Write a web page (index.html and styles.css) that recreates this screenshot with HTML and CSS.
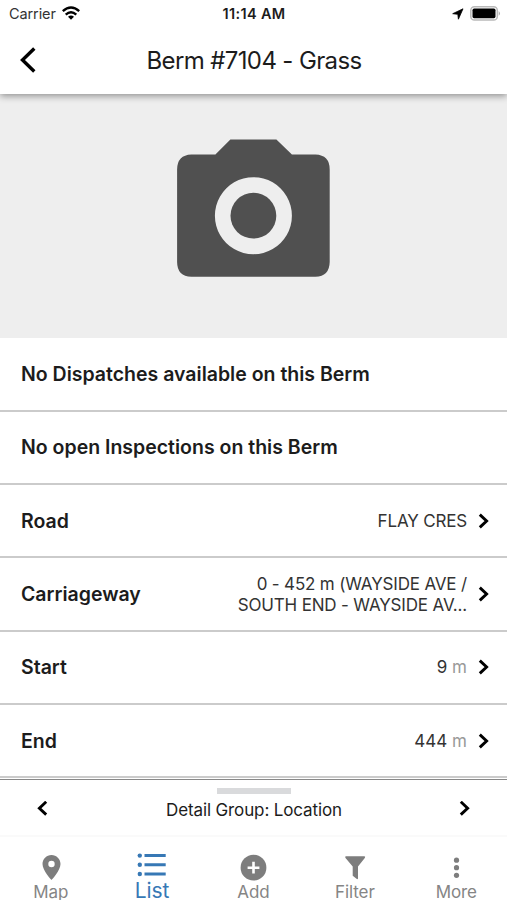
FILE: index.html
```html
<!DOCTYPE html>
<html lang="en">
<head>
<meta charset="utf-8">
<title>Berm #7104 - Grass</title>
<link rel="stylesheet" href="styles.css">
</head>
<body>
<div class="screen">
  <header class="top">
    <div class="status">
      <div class="status-left"><span class="carrier">Carrier</span>
        <svg class="wifi" width="18" height="14" viewBox="0 0 18 14"><g fill="none" stroke="#000" stroke-width="2.4"><path d="M.8 5.200Q9-2 17.200 5.200"/><path d="M3.700 8.600Q9 3.900 14.300 8.600"/></g><path d="M6 10.800Q9 8.200 12 10.800L9 13.800Z"/></svg>
      </div>
      <span class="time">11:14 AM</span>
      <div class="status-right">
        <svg width="12" height="12" viewBox="0 0 12 12"><path d="M11 .8 6.400 11.200 5.800 6.300.7 5.700Z" stroke="#000" stroke-width=".8" stroke-linejoin="round"/></svg>
        <svg width="31" height="15" viewBox="0 0 31 15"><rect x=".8" y=".8" width="26.500" height="13.200" rx="3.600" fill="#fff" stroke="#b9b9b9" stroke-width="1.500"/><rect x="2.500" y="2.600" width="23" height="9.600" rx="1.600"/><path d="M28.700 5q2.500 2.400 0 4.800Z" fill="#aaa"/></svg>
      </div>
    </div>
    <div class="navbar">
      <svg class="back" width="18" height="28" viewBox="0 0 18 28"><path d="M15.300 2.500 3.500 14l11.800 11.500" fill="none" stroke="#000" stroke-width="3.400"/></svg>
      <h1>Berm #7104 - Grass</h1>
      <span class="navbar-end"></span>
    </div>
  </header>
  <div class="photo">
    <svg width="154" height="138" viewBox="-.4 0 154 138"><path fill="#505050" fill-rule="evenodd" d="M54 .5H100L115.500 15.500H139Q153.300 16 153.300 30.500V123Q153 137.500 139 137.800H15Q.8 137.500.7 123V30.500Q.8 16 15 15.500H39ZM77 38.200a38.500 38.500 0 1 0 .01 0Z"/><circle cx="77" cy="76.700" r="22.900" fill="#505050"/></svg>
  </div>
  <main class="rows">
    <div class="row"><b>No Dispatches available on this Berm</b></div>
    <div class="row raised"><b>No open Inspections on this Berm</b></div>
    <div class="row"><b>Road</b><span class="value caps">FLAY CRES</span><svg class="chev" width="11" height="16" viewBox="0 0 11 16"><path d="m1.800 1.600 6.800 6.400-6.800 6.400"/></svg></div>
    <div class="row"><b>Carriageway</b><span class="value caps">0 - 452 m (WAYSIDE AVE /<br>SOUTH END - WAYSIDE AV...</span><svg class="chev" width="11" height="16" viewBox="0 0 11 16"><path d="m1.800 1.600 6.800 6.400-6.800 6.400"/></svg></div>
    <div class="row raised"><b>Start</b><span class="value">9 <i>m</i></span><svg class="chev" width="11" height="16" viewBox="0 0 11 16"><path d="m1.800 1.600 6.800 6.400-6.800 6.400"/></svg></div>
    <div class="row"><b>End</b><span class="value">444 <i>m</i></span><svg class="chev" width="11" height="16" viewBox="0 0 11 16"><path d="m1.800 1.600 6.800 6.400-6.800 6.400"/></svg></div>
  </main>
  <section class="group">
    <div class="handle"></div>
    <div class="group-bar">
      <svg class="chev" width="11" height="16" viewBox="0 0 11 16"><path d="M9.200 .8 2.400 7.200l6.800 6.400"/></svg>
      <span>Detail Group: Location</span>
      <svg class="chev" width="11" height="16" viewBox="0 0 11 16"><path d="m1.800 .8 6.800 6.400-6.800 6.400"/></svg>
    </div>
  </section>
  <nav class="tabs">
    <div class="tab"><svg width="30" height="28" viewBox="0 0 30 28"><path fill="#7d7d7d" fill-rule="evenodd" d="M15.500 2c-5 0-9 4-9 9 0 6.500 9 16 9 16s9-9.500 9-16c0-5-4-9-9-9Zm0 5.800a3.200 3.200 0 1 1 0 6.400 3.200 3.200 0 0 1 0-6.400Z"/></svg><span>Map</span></div>
    <div class="tab active"><svg width="30" height="28" viewBox="0 0 30 28"><g fill="#3778b5"><circle cx="2.800" cy="2.600" r="2.200"/><circle cx="2.800" cy="11.800" r="2.200"/><circle cx="2.800" cy="21" r="2.200"/><path d="M7.500 1.100h21.200v3H7.500ZM7.500 10.300h21.200v3H7.500ZM7.500 19.500h21.200v3H7.500Z"/></g></svg><span>List</span></div>
    <div class="tab"><svg width="30" height="28" viewBox="0 0 30 28"><circle cx="15.500" cy="14.700" r="12.900" fill="#7d7d7d"/><path d="M15.500 8.800v11.800M9.600 14.700h11.800" stroke="#fff" stroke-width="2.600"/></svg><span>Add</span></div>
    <div class="tab"><svg width="30" height="28" viewBox="0 0 30 28"><path fill="#7d7d7d" d="M6 3.300H24.300Q25.800 3.600 24.800 5L18 13.500V25.500Q17.600 26.600 16.500 25.800L12.700 22.800V13.500L5.500 5Q4.500 3.600 6 3.300Z"/></svg><span>Filter</span></div>
    <div class="tab"><svg width="30" height="28" viewBox="0 0 30 28"><g fill="#7d7d7d"><circle cx="15.500" cy="7.200" r="2.600"/><circle cx="15.500" cy="14.700" r="2.600"/><circle cx="15.500" cy="22.300" r="2.600"/></g></svg><span>More</span></div>
  </nav>
</div>
</body>
</html>
```
FILE: styles.css
```css
* { box-sizing: border-box; }
body { margin: 0; background: #fff; color: #1c1c1c; font-family: Inter, "Liberation Sans", sans-serif; }
svg { display: block; flex: none; }
.screen { width: 507px; height: 900px; overflow: hidden; display: flex; flex-direction: column; }
.top { height: 94px; flex: none; position: relative; background: #fff; box-shadow: 0 2px 7px rgba(0,0,0,.4); }
.status { height: 27px; display: grid; grid-template-columns: 1fr auto 1fr; align-items: center; padding: 0 6px 0 9px; font-size: 14.5px; }
.status-left, .status-right { display: flex; align-items: center; }
.status-left { gap: 6px; }
.status-right { justify-content: flex-end; gap: 6px; }
.carrier { letter-spacing: -.1px; color: #333; }
.wifi { margin-top: -2px; }
.time { font-weight: 600; letter-spacing: .35px; margin-left: -2px; }
.navbar { height: 65px; display: grid; grid-template-columns: 60px 1fr 60px; align-items: center; }
.back { margin-left: 19px; }
h1 { margin: 0; padding: 2px 0 0 1px; text-align: center; font-size: 24px; font-weight: 400; letter-spacing: -.63px; white-space: nowrap; }
.photo { height: 244px; flex: none; background: #eee; display: flex; justify-content: center; padding: 45px 1px 0 0; }
.rows { flex: none; display: grid; grid-template-rows: 74px 73px 73px 74px 73px 73px; }
.row { display: flex; align-items: center; border-bottom: 2px solid #cbcbcb; padding: 0 18.5px 0 21px; }
.raised { padding-bottom: 1px; }
.row b { font-size: 19.5px; font-weight: 600; white-space: nowrap; }
.value { margin-left: auto; margin-right: 10.5px; padding-top: 1px; text-align: right; font-size: 17px; line-height: 21px; white-space: nowrap; color: #333; }
.caps { letter-spacing: -.17px; }
.value i { color: #999; font-style: normal; }
.chev path { fill: none; stroke: #000; stroke-width: 2.9; }
.group { height: 56px; flex: none; margin-top: 1px; border-top: 1px solid #888; }
.handle { width: 74px; height: 6px; margin: 8px auto 0; background: #d9dadc; }
.group-bar { height: 29px; display: flex; align-items: center; justify-content: space-between; padding: 0 37px; font-size: 17px; letter-spacing: -.13px; }
.group-bar span { padding: 2px 0 0 1px; }
.tabs { flex: none; height: 66px; border-top: 2px solid #fafafa; display: grid; grid-template-columns: repeat(5, 1fr); padding-top: 16px; }
.tab { display: flex; flex-direction: column; align-items: center; font-size: 17px; line-height: 22px; letter-spacing: -.1px; color: #858585; }
.tab span { white-space: nowrap; }
.active { color: #3778b5; font-size: 21px; }
.active span { margin-top: -1px; }
```
